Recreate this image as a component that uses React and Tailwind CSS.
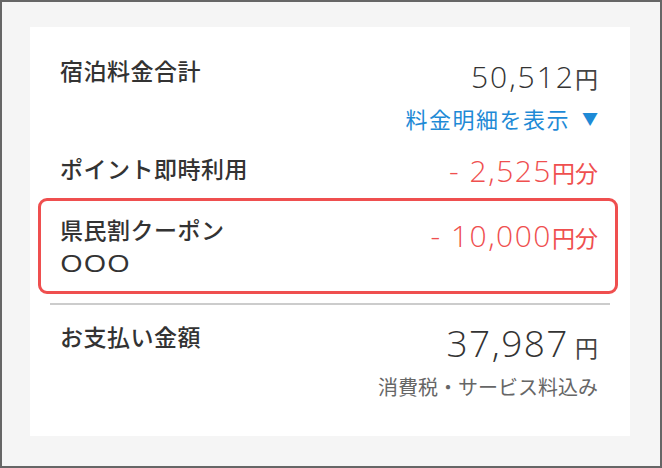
export default function App() {
  const jp = { fontFamily: '"Noto Sans CJK JP", "Noto Sans", sans-serif' };
  const num = { fontFamily: '"Open Sans", "Noto Sans", sans-serif' };

  return (
    <div
      className="w-[662px] h-[468px] bg-[#f5f5f5] border-2 border-[#666] pt-[25px] pl-[28px] text-[#333]"
      style={jp}
    >
      <div className="w-[600px] h-[409px] bg-white pt-[28px] pl-2 pr-3">
        {/* 宿泊料金合計 */}
        <div className="flex justify-between items-start pl-[22px] pr-[20px]">
          <div className="text-[23px] leading-[30px] tracking-[0.5px] font-medium">宿泊料金合計</div>
          <div className="flex flex-col items-end mt-[5px]">
            <div className="flex items-baseline leading-[34px]">
              <span className="text-[30px] font-light tracking-[2px]" style={num}>50,512</span>
              <span className="text-[23px] text-[#444]">円</span>
            </div>
            <div className="flex items-center leading-[30px] mt-[8px] text-[#1e8ad6]">
              <span className="text-[22px] tracking-[1.5px]">料金明細を表示</span>
              <span className="text-[16px] ml-[12px]">▼</span>
            </div>
          </div>
        </div>

        {/* ポイント即時利用 */}
        <div className="flex justify-between items-start pl-[22px] pr-[20px] mt-[20px]">
          <div className="text-[23px] leading-[30px] tracking-[0.5px] font-medium">ポイント即時利用</div>
          <div className="flex items-baseline text-[#ef4f4f] leading-[30px] mt-[3px]">
            <span className="text-[30px] font-light tracking-[1.5px]" style={num}>- 2,525</span>
            <span className="text-[23px]">円分</span>
          </div>
        </div>

        {/* 県民割クーポン */}
        <div className="mt-[11px] border-[3px] border-[#ef4f4f] rounded-[9px] h-[96px] flex justify-between items-start pl-[19px] pr-[17px] pt-[13px]">
          <div className="text-[23px] leading-[30px] tracking-[0.5px] font-medium">
            <div>県民割クーポン</div>
            <div className="mt-[3px]">
              <span
                className="inline-block origin-left scale-x-[1.28] font-normal tracking-[0.5px]"
                style={num}
              >
                OOO
              </span>
            </div>
          </div>
          <div className="flex items-baseline text-[#ef4f4f] leading-[30px] mt-[7px]">
            <span className="text-[30px] font-light tracking-[1.5px]" style={num}>- 10,000</span>
            <span className="text-[23px]">円分</span>
          </div>
        </div>

        <div className="ml-3 mr-2 mt-[9px] border-t-2 border-[#cccccc]" />

        {/* お支払い金額 */}
        <div className="flex justify-between items-start pl-[22px] pr-[20px] mt-[16px]">
          <div className="text-[23px] leading-[30px] tracking-[0.5px] font-medium">お支払い金額</div>
          <div className="flex flex-col items-end mt-[2px]">
            <div className="flex items-baseline leading-[40px]">
              <span className="text-[37px] font-light tracking-[1.5px]" style={num}>37,987</span>
              <span className="text-[23px] ml-[6px] text-[#444]">円</span>
            </div>
            <div className="text-[20px] leading-[24px] mt-[8px] text-[#666]">
              消費税・サービス料込み
            </div>
          </div>
        </div>
      </div>
    </div>
  );
}
